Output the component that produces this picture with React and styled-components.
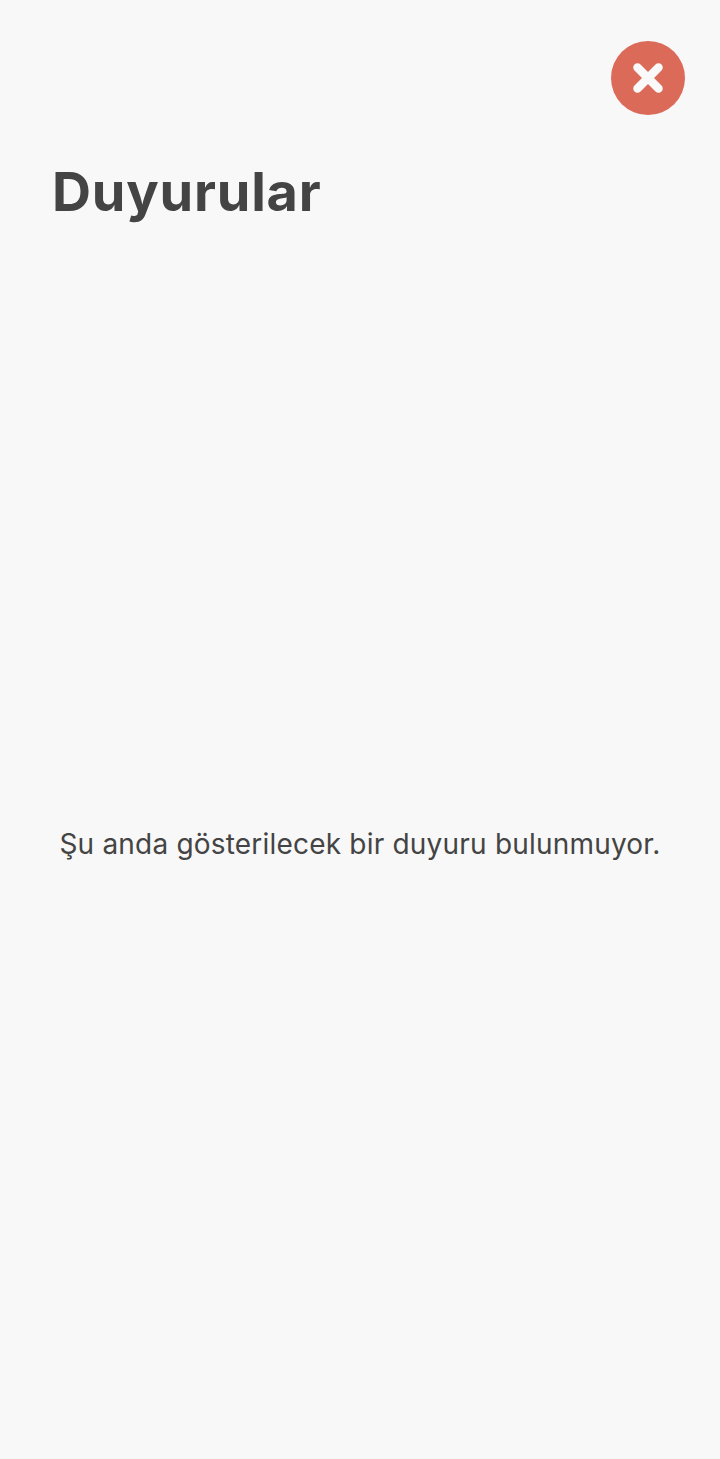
import React from "react";
import styled, { createGlobalStyle } from "styled-components";

const GlobalStyle = createGlobalStyle`
  html, body {
    margin: 0;
    padding: 0;
    background: #f8f8f8;
  }
`;

export default function App() {
  return (
    <Page>
      <GlobalStyle />
      <TopBar>
        <CloseButton aria-label="Kapat">
          <svg width="34" height="34" viewBox="0 0 34 34" fill="none">
            <path d="M6.5 6.5 L27.5 27.5 M27.5 6.5 L6.5 27.5" stroke="#f9f9f9" strokeWidth="8.5" strokeLinecap="round" />
          </svg>
        </CloseButton>
      </TopBar>
      <Title>Duyurular</Title>
      <Empty>
        <Message>Şu anda gösterilecek bir duyuru bulunmuyor.</Message>
      </Empty>
    </Page>
  );
}

const Page = styled.div`
  width: 720px;
  height: 1459px;
  display: flex;
  flex-direction: column;
  background: #f8f8f8;
  color: #444444;
  font-family: "Inter", "Noto Sans", sans-serif;
`;

const TopBar = styled.div`
  display: flex;
  justify-content: flex-end;
  padding: 41px 35px 0 0;
`;

const CloseButton = styled.button`
  width: 74px;
  height: 74px;
  border: none;
  border-radius: 50%;
  padding: 0;
  background: #dc6a58;
  display: flex;
  align-items: center;
  justify-content: center;
`;

const Title = styled.h1`
  margin: 44px 0 0 52px;
  font-size: 54px;
  line-height: 66px;
  font-weight: 700;
  letter-spacing: 0.8px;
`;

const Empty = styled.div`
  padding-top: 601px;
  display: flex;
  justify-content: center;
`;

const Message = styled.p`
  margin: 0;
  font-size: 28px;
  line-height: 36px;
  font-weight: 400;
  letter-spacing: 0.2px;
`;
